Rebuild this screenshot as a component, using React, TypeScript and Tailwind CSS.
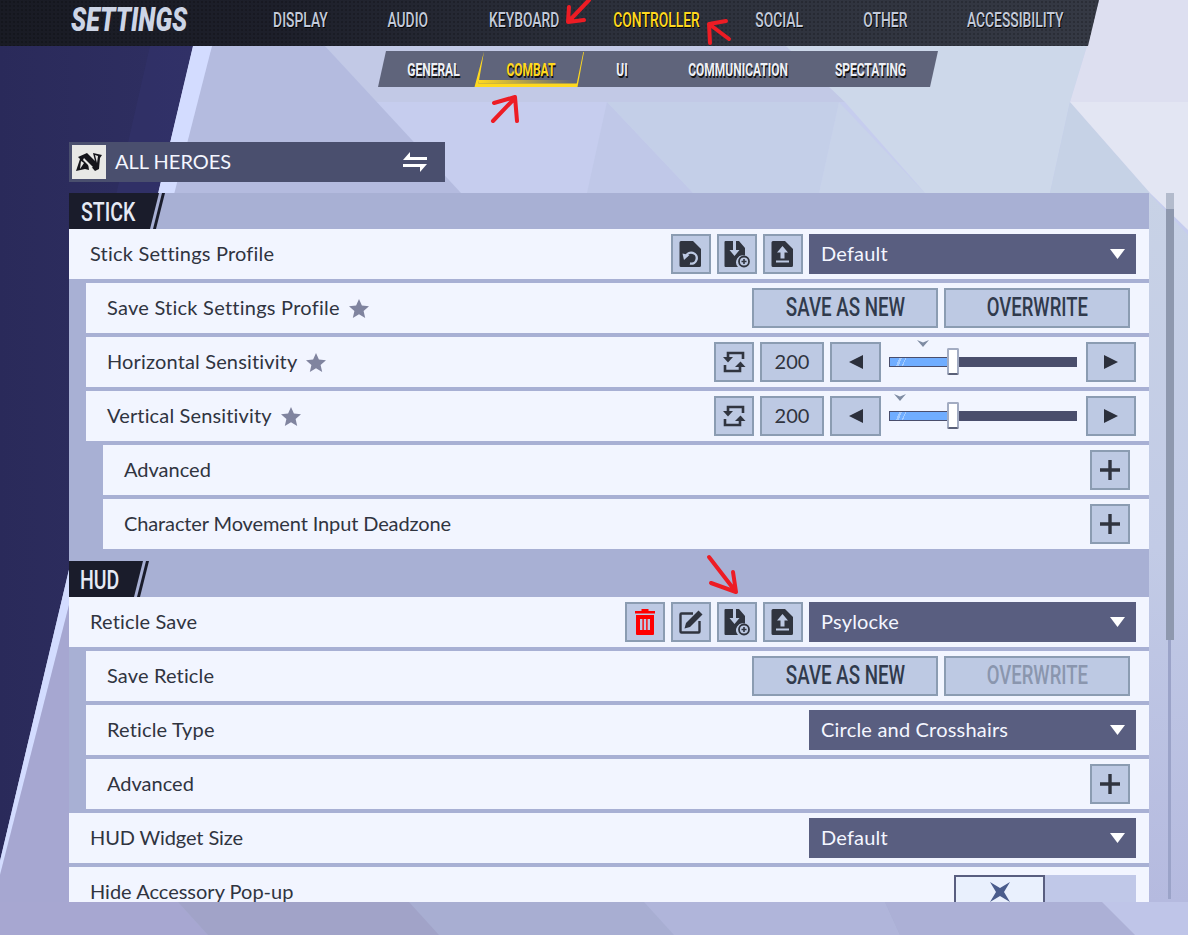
import React from "react";

const Narrow = ({ className = "", children }: { className?: string; children: React.ReactNode }) => (
  <span className={`inline-block whitespace-nowrap font-[Roboto,sans-serif] ${className}`}>{children}</span>
);

const NavItem = ({ w, active, children, className = "" }: { w: string; active?: boolean; children: string; className?: string }) => (
  <div className={`flex justify-center ${w} ${className}`}>
    <Narrow className={`scale-x-[.66] text-[21px] font-medium leading-[40px] [text-shadow:1px_1px_0_#000] ${active ? "text-[#ffd91f]" : "text-[#c3cada]"}`}>{children}</Narrow>
  </div>
);

const SubItem = ({ w, active, children, className = "" }: { w: string; active?: boolean; children: string; className?: string }) => (
  <div className={`flex justify-center ${w} ${className}`}>
    <Narrow className={`scale-x-[.63] text-[19px] font-bold leading-[37px] [text-shadow:1.500px_1.500px_0_#111] ${active ? "text-[#ffd91f]" : "text-[#eef0f6]"}`}>{children}</Narrow>
  </div>
);

const Btn = ({ className = "w-[40px]", children }: { className?: string; children?: React.ReactNode }) => (
  <div className={`flex h-[40px] shrink-0 items-center justify-center border-2 border-[#8b9cb2] bg-[#bdc9e3] ${className}`}>{children}</div>
);

const FileShape = ({ children }: { children?: React.ReactNode }) => (
  <svg width="24" height="28" viewBox="0 0 24 28">
    <path d="M2 1h12l8 8v16.500a1.500 1.500 0 0 1-1.500 1.500h-18.500A1.500 1.500 0 0 1 0.500 25.500V2.500A1.500 1.500 0 0 1 2 1z" fill="#30343f" />
    {children}
  </svg>
);

const LoadIcon = () => (
  <FileShape>
    <path d="M7 16.500A5.500 5.500 0 1 1 11 23.500" fill="none" stroke="#bdc9e3" strokeWidth="2.400" />
    <path d="M3.500 13.500l7 1.500-5.500 5z" fill="#bdc9e3" />
  </FileShape>
);
const SaveIcon = () => (
  <svg width="26" height="28" viewBox="0 0 26 28">
    <path d="M1.500 1h7.500v9H5.500l5 6 5-6H12V1h3l6 7v7.500a7 7 0 0 0-7 11.500H1.500a1 1 0 0 1-1-1V2a1 1 0 0 1 1-1z" fill="#30343f" />
    <circle cx="20" cy="21.500" r="5" fill="#bdc9e3" stroke="#30343f" strokeWidth="1.800" />
    <path d="M17.500 21.500h5M20 19v5" stroke="#30343f" strokeWidth="1.600" />
  </svg>
);
const UploadIcon = () => (
  <FileShape>
    <path d="M11.500 6l5.500 6.500h-3.500v6h-4v-6H6z" fill="#bdc9e3" />
    <rect x="5" y="20.500" width="13" height="2" fill="#bdc9e3" />
  </FileShape>
);
const TrashIcon = () => (
  <svg width="22" height="28" viewBox="0 0 22 28">
    <path d="M7.500 3V1h7v2H21v2.500H1V3z" fill="#ff0000" />
    <path fillRule="evenodd" d="M2 7h18v19a1 1 0 0 1-1 1H3a1 1 0 0 1-1-1zM6 11v11h2.400V11zM9.800 11v11h2.400V11zM13.600 11v11H16V11z" fill="#ff0000" />
  </svg>
);
const EditIcon = () => (
  <svg width="24" height="24" viewBox="0 0 24 24">
    <path d="M14 3.500H2.500a1 1 0 0 0-1 1v17a1 1 0 0 0 1 1h17a1 1 0 0 0 1-1V11" fill="none" stroke="#30343f" strokeWidth="2.400" />
    <path d="M19.500 0.500l4 4L11 17l-5.500 1.500L7 13z" fill="#30343f" />
  </svg>
);
const ResetIcon = () => (
  <svg width="24" height="24" viewBox="0 0 24 24" fill="none" stroke="#30343f" strokeWidth="2.600">
    <path d="M21 9V3H6v4" />
    <path d="M3 15v6h15v-4" />
    <path d="M1 7h10l-5 5.500z" fill="#30343f" stroke="none" />
    <path d="M13 17h10.500l-5-5.500z" fill="#30343f" stroke="none" />
  </svg>
);
const Plus = () => (
  <svg width="20" height="20" viewBox="0 0 20 20"><path d="M0 8.300h20v3.400H0zM8.300 0h3.400v20H8.300z" fill="#30343f" /></svg>
);
const LeftTri = () => <svg width="14" height="14" viewBox="0 0 14 14"><path d="M0 7L14 0v14z" fill="#2c303c" /></svg>;
const RightTri = () => <svg width="14" height="14" viewBox="0 0 14 14"><path d="M14 7L0 0v14z" fill="#2c303c" /></svg>;

const Select = ({ value, className = "w-[327px]" }: { value: string; className?: string }) => (
  <div className={`flex h-[40px] items-center justify-between bg-[#595e80] pl-[12px] pr-[11px] text-[20px] tracking-[.2px] text-[#f4f6ff] ${className}`}>
    <span className="pb-[2px]">{value}</span>
    <svg width="15" height="10" viewBox="0 0 15 10"><path d="M0 0h15L7.500 10z" fill="#fff" /></svg>
  </div>
);

const Row = ({ level = 0, label, star, track = "tracking-[.15px]", children }: { level?: 0 | 1 | 2; label: string; star?: boolean; track?: string; children?: React.ReactNode }) => (
  <div className={`mb-[4px] flex h-[50px] shrink-0 items-center justify-between bg-[#f2f5ff] pl-[21px] pr-[13px] ${level === 1 ? "ml-[17px]" : level === 2 ? "ml-[34px]" : ""}`}>
    <div className={`flex items-center gap-[9px] text-[20px] text-[#30343f] ${track}`}>
      <span className="pb-[2px]">{label}</span>
      {star && (
        <svg width="20" height="19" viewBox="0 0 20 19"><path d="M10 0l2.900 6.500 7.100.7-5.400 4.700 1.600 7L10 15.200 3.800 18.900l1.600-7L0 7.200l7.100-.7z" fill="#80849f" /></svg>
      )}
    </div>
    <div className="flex items-center">{children}</div>
  </div>
);

const SaveButtons = ({ disabled }: { disabled?: boolean }) => (
  <div className="mr-[6px] flex gap-[6px]">
    <Btn className="w-[186px]"><Narrow className="scale-x-[.75] text-[25px] font-medium text-[#303a4c]">SAVE AS NEW</Narrow></Btn>
    <Btn className="w-[186px]"><Narrow className={`scale-x-[.74] text-[25px] font-medium ${disabled ? "text-[#8a96ae]" : "text-[#303a4c]"}`}>OVERWRITE</Narrow></Btn>
  </div>
);

const Slider = ({ marker }: { marker: string }) => (
  <div className="flex items-center">
    <Btn><ResetIcon /></Btn>
    <Btn className="ml-[6px] w-[64px] text-[20px] text-[#30343f]"><span className="pb-[2px]">200</span></Btn>
    <Btn className="ml-[6px] w-[51px]"><LeftTri /></Btn>
    <div className="relative ml-[8px] mr-[9px] h-[50px] w-[188px]">
      <svg width="12" height="7" viewBox="0 0 12 7" className={`absolute top-[3px] ${marker}`}><path d="M0 0l6 2.500L12 0 6 7z" fill="#7f8ca3" /></svg>
      <div className="absolute left-0 right-0 top-[20px] flex h-[10px] border border-[#4a4e6c] bg-[#4a4e6c]">
        <div className="h-full w-[60px] bg-[linear-gradient(115deg,#70adff_15%,#a5ccff_15%,#a5ccff_19%,#70adff_19%,#70adff_24%,#a5ccff_24%,#a5ccff_26%,#70adff_26%)]" />
      </div>
      <div className="absolute left-[58px] top-[11px] h-[27px] w-[12px] rounded-[2px] border-2 border-[#a3acc2] border-b-[#5a6078] bg-white" />
    </div>
    <Btn className="w-[50px]"><RightTri /></Btn>
  </div>
);

const Background = () => (
  <svg className="absolute inset-0" width="1188" height="935" viewBox="0 0 1188 935">
    <defs>
      <linearGradient id="dark" x1="0" y1="0" x2="1" y2="0">
        <stop offset="0" stopColor="#2a2a5a" />
        <stop offset="1" stopColor="#2f2f62" />
      </linearGradient>
      <linearGradient id="side" x1="0" y1="0" x2="0" y2="1">
        <stop offset="0" stopColor="#c8d2e6" />
        <stop offset=".5" stopColor="#c2cbe6" />
        <stop offset="1" stopColor="#b5badf" />
      </linearGradient>
    </defs>
    <rect width="1188" height="935" fill="#c6cdee" />
    <path d="M325 46H786L845 102H376z" fill="#c2c9e6" />
    <path d="M786 46H1087L1070 102H845z" fill="#cdd8ea" />
    <path d="M212 46H325L461 193H165z" fill="#b4bbdf" />
    <path d="M607 102L693 193H587z" fill="#c0c8e8" />
    <path d="M607 102H839L819 193H693z" fill="#c4cfe8" />
    <path d="M839 102L925 193H819z" fill="#c8d3e9" />
    <path d="M845 102H1070L1050 193H925z" fill="#cdd8ea" />
    <path d="M1070 102L1150 193H1050z" fill="#c6d2e6" />
    <path d="M1099 0H1188V102H1070L1087 46z" fill="#dddff0" />
    <path d="M1070 102H1188V230L1150 193z" fill="#e3e6f3" />
    <path d="M1149 193L1188 235V902H1149z" fill="url(#side)" />
    <path d="M0 46H193L0 861z" fill="url(#dark)" />
    <path d="M150 46H193L130 310H90z" fill="#32326a" opacity=".7" />
    <path d="M193 46H212L0 875V861z" fill="#d3dcff" />
    <path d="M0 875L69 605V902H0z" fill="#a6a7d1" />
    <rect y="902" width="1188" height="33" fill="#a8aed2" />
    <path d="M0 902H178L208 935H0z" fill="#a7a7d1" />
    <path d="M178 902H409L439 935H208z" fill="#a1a3c8" />
    <path d="M644 902H885L900 935H674z" fill="#b0b5da" />
    <path d="M885 902H1102L1135 935H900z" fill="#acb0d6" />
    <path d="M1102 902H1188V935H1135z" fill="#bfc5e8" />
  </svg>
);

const Annotations = () => (
  <svg className="pointer-events-none absolute inset-0" width="1188" height="935" viewBox="0 0 1188 935" fill="none" stroke="#ed1c24" strokeWidth="4" strokeLinecap="round" strokeLinejoin="round">
    <path d="M589 0L570 20M569 7l-1 15 16-2" />
    <path d="M709 24l20 15M726 21l-17 3 1 19" />
    <path d="M515 98L493 121M494 103l21-6 2 24" />
    <path d="M709 557l27 35M711 583l25 9-3-20" />
  </svg>
);

export default function App() {
  return (
    <div className="relative h-[935px] w-[1188px] overflow-hidden font-[Lato,sans-serif]">
      <Background />
      <div className="relative">
        {/* top bar */}
        <div className="flex h-[46px] w-[1099px] items-start bg-[radial-gradient(#00000030_1px,transparent_1px),linear-gradient(90deg,#191b24_0%,#1d1f2a_25%,#2c303b_55%,#353944_100%)] bg-[length:4px_4px,auto] [clip-path:polygon(0_0,100%_0,1088px_100%,0_100%)]">
          <div className="ml-[71px] w-[116px]">
            <Narrow className="origin-left scale-x-[.76] text-[33px] font-black italic leading-[40px] text-[#cdd5e6]">SETTINGS</Narrow>
          </div>
          <NavItem w="w-[56px]" className="ml-[85px]">DISPLAY</NavItem>
          <NavItem w="w-[40px]" className="ml-[60px]">AUDIO</NavItem>
          <NavItem w="w-[70px]" className="ml-[61px]">KEYBOARD</NavItem>
          <NavItem w="w-[86px]" className="ml-[55px]" active>CONTROLLER</NavItem>
          <NavItem w="w-[47px]" className="ml-[56px]">SOCIAL</NavItem>
          <NavItem w="w-[42px]" className="ml-[61px]">OTHER</NavItem>
          <NavItem w="w-[99px]" className="ml-[60px]">ACCESSIBILITY</NavItem>
        </div>

        {/* sub nav */}
        <div className="relative ml-[378px] mt-[5px] flex h-[36px] w-[560px] bg-[#5f647b] [clip-path:polygon(8px_0,100%_0,552px_100%,0_100%)]">
          <SubItem w="w-[53px]" className="ml-[29px]">GENERAL</SubItem>
          <SubItem w="w-[49px]" className="ml-[46px]" active>COMBAT</SubItem>
          <SubItem w="w-[12px]" className="ml-[61px]">UI</SubItem>
          <SubItem w="w-[99px]" className="ml-[61px]">COMMUNICATION</SubItem>
          <SubItem w="w-[73px]" className="ml-[46px]">SPECTATING</SubItem>
          <svg className="absolute left-[96px] top-0" width="112" height="36" viewBox="0 0 112 36">
            <defs>
              <linearGradient id="streak" x1="0" y1="0" x2="1" y2="0">
                <stop offset="0" stopColor="#ffd91f" />
                <stop offset="1" stopColor="#ffd91f" stopOpacity="0" />
              </linearGradient>
            </defs>
            <path d="M10 0.500L4.500 32.500H103V36H0.500z" fill="#ffd91f" />
            <path d="M110 1l-6.500 35h-1.500l7.300-35z" fill="#ffd91f" />
            <path d="M5 29h94v3.500H4.500z" fill="url(#streak)" />
          </svg>
        </div>

        {/* hero select */}
        <div className="ml-[69px] mt-[55px] flex h-[40px] w-[376px] items-center bg-[#4a4f6e] pl-[3px] pr-[18px]">
          <div className="flex h-[34px] w-[34px] items-center justify-center bg-[#e8e8e6]">
            <svg width="28" height="20" viewBox="0 0 28 20" fill="#14141a">
              <path d="M1 19L5 7l-2-2 9-4 8 8-2-8 9 2-2 3-1 11-4 2-7-8 1 7-4-1z" />
              <path d="M9 6l9 9-2 1-8-8z M9 11l-4 6 1-8z M20 3l3 1-1 7z" fill="#e8e8e6" />
            </svg>
          </div>
          <span className="ml-[9px] pb-[2px] text-[20px] text-[#f4f6ff]">ALL HEROES</span>
          <svg className="ml-auto" width="24" height="22" viewBox="0 0 24 22" fill="#fff">
            <path d="M7 1v5h17v3H0z" />
            <path d="M17 21v-5H0v-3h24z" />
          </svg>
        </div>

        {/* panel */}
        <div className="mt-[11px] flex items-start">
          <div className="ml-[69px] flex h-[709px] w-[1080px] flex-col overflow-hidden bg-[#a8b0d4]">
            <div className="flex h-[36px] shrink-0">
              <div className="h-full w-[90px] bg-[#1a1c2b] pl-[12px] [clip-path:polygon(0_0,100%_0,81px_100%,0_100%)]">
                <Narrow className="origin-left scale-x-[.75] text-[26px] font-medium leading-[38px] text-[#e6eaf5]">STICK</Narrow>
              </div>
              <div className="-ml-[6px] h-full w-[12px] bg-[#1a1c2b] [clip-path:polygon(9px_0,100%_0,3px_100%,0_100%)]" />
            </div>
            <Row label="Stick Settings Profile" track="tracking-[.2px]">
              <div className="flex gap-[6px]">
                <Btn><LoadIcon /></Btn>
                <Btn><SaveIcon /></Btn>
                <Btn><UploadIcon /></Btn>
                <Select value="Default" />
              </div>
            </Row>
            <Row level={1} label="Save Stick Settings Profile" star track="tracking-[.25px]"><SaveButtons /></Row>
            <Row level={1} label="Horizontal Sensitivity" star><Slider marker="left-[28px]" /></Row>
            <Row level={1} label="Vertical Sensitivity" star><Slider marker="left-[5px]" /></Row>
            <Row level={2} label="Advanced" track="tracking-normal"><div className="mr-[6px]"><Btn><Plus /></Btn></div></Row>
            <Row level={2} label="Character Movement Input Deadzone" track="tracking-[-.12px]"><div className="mr-[6px]"><Btn><Plus /></Btn></div></Row>

            <div className="mt-[8px] flex h-[36px] shrink-0">
              <div className="h-full w-[74px] bg-[#1a1c2b] pl-[11px] [clip-path:polygon(0_0,100%_0,65px_100%,0_100%)]">
                <Narrow className="origin-left scale-x-[.75] text-[26px] font-medium leading-[38px] text-[#e6eaf5]">HUD</Narrow>
              </div>
              <div className="-ml-[6px] h-full w-[12px] bg-[#1a1c2b] [clip-path:polygon(9px_0,100%_0,3px_100%,0_100%)]" />
            </div>
            <Row label="Reticle Save">
              <div className="flex gap-[6px]">
                <Btn><TrashIcon /></Btn>
                <Btn><EditIcon /></Btn>
                <Btn><SaveIcon /></Btn>
                <Btn><UploadIcon /></Btn>
                <Select value="Psylocke" />
              </div>
            </Row>
            <Row level={1} label="Save Reticle"><SaveButtons disabled /></Row>
            <Row level={1} label="Reticle Type"><Select value="Circle and Crosshairs" /></Row>
            <Row level={1} label="Advanced" track="tracking-normal"><div className="mr-[6px]"><Btn><Plus /></Btn></div></Row>
            <Row label="HUD Widget Size" track="tracking-[-.12px]"><Select value="Default" /></Row>
            <Row label="Hide Accessory Pop-up" track="tracking-normal">
              <div className="flex h-[50px] w-[182px] pt-[8px]">
                <div className="flex h-full w-[91px] items-start justify-center border-2 border-[#595e80] bg-[#e9f0fd] pt-[5px]">
                  <svg width="20" height="20" viewBox="0 0 20 20"><path d="M0 0l10 6L20 0l-6 10 6 10-10-6L0 20l6-10z" fill="#4a5c8c" /></svg>
                </div>
                <div className="h-full w-[91px] bg-[#c0c8e8]" />
              </div>
            </Row>
          </div>

          {/* scrollbar */}
          <div className="ml-[17px] flex w-[8px] flex-col">
            <div className="h-[447px] bg-[linear-gradient(180deg,#b3bbcc_0,#b3bbcc_16px,#8e98ae_16px)]" />
            <div className="ml-[2px] h-[259px] w-[3px] bg-[#9ba3c8]" />
          </div>
        </div>
      </div>
      <Annotations />
    </div>
  );
}
